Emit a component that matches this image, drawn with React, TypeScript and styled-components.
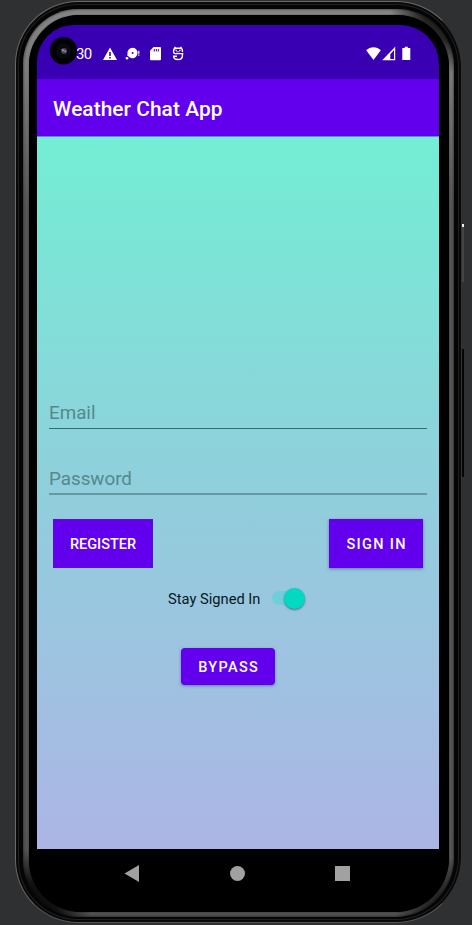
import React from "react";
import styled, { createGlobalStyle } from "styled-components";

const GlobalStyle = createGlobalStyle`
  *, *::before, *::after { box-sizing: border-box; }
  html, body { margin: 0; padding: 0; background: #2f3032; overflow: hidden; }
  body { font-family: Roboto, sans-serif; }
  button, input { font-family: inherit; margin: 0; }
`;

const Desk = styled.main`
  width: 472px;
  height: 925px;
  padding: 1px 10px 2px 15px;
  background: #2f3032;
`;

const Shell = styled.div`
  position: relative;
  width: 447px;
  height: 922px;
  padding: 7px 7px 5px;
  border: 1px solid #68696a;
  border-right-color: #343434;
  border-bottom-color: #555;
  border-radius: 63px 66px 66px 63px;
  background: #050505;
  box-shadow: inset 0 0 0 2px #090909, inset 0 0 0 3px #202020;
`;

const MetalRim = styled.div`
  height: 100%;
  padding: 6px 5px 5px 6px;
  border-radius: 55px 57px 59px 56px;
  background:
    radial-gradient(circle at 100% 0, #151515 0, #252525 32px, transparent 64px),
    radial-gradient(circle at 0 100%, #050505 0, #111 34px, transparent 68px),
    radial-gradient(circle at 100% 100%, #101010 0, #242424 25px, transparent 60px),
    linear-gradient(180deg, #858585 0, #7c7c7c 60px, #555 200px, #555 820px, #505050 100%);
  box-shadow: inset 0 0 2px 1px rgba(0, 0, 0, 0.35);
`;

const Bezel = styled.div`
  height: 100%;
  padding: 10px 10px 0 8px;
  border-radius: 50px 52px 54px 52px;
  background: #000;
  box-shadow: 0 0 1px #000;
`;

const Screen = styled.div`
  width: 402px;
  height: 824px;
  display: flex;
  flex-direction: column;
  overflow: hidden;
  border-radius: 37px 39px 0 0;
`;

const SideKey = styled.i<{ $top: number; $height: number; $color: string }>`
  position: absolute;
  right: -3px;
  top: ${(p) => p.$top}px;
  width: 2px;
  height: ${(p) => p.$height}px;
  background: ${(p) => p.$color};
`;

const StatusBar = styled.header`
  height: 54px;
  flex: none;
  display: flex;
  align-items: center;
  justify-content: space-between;
  padding: 3px 24px 0 39px;
  position: relative;
  background: #3900b3;
  color: #fff;
`;

const StatusGroup = styled.div`
  display: flex;
  align-items: center;
`;

const Clock = styled.span`
  width: 26px;
  font-size: 15px;
  line-height: 18px;
  letter-spacing: -0.7px;
`;

const StatusIcon = styled.svg<{ $gap?: number }>`
  display: block;
  width: 16px;
  height: 16px;
  margin-left: ${(p) => p.$gap ?? 0}px;
  fill: currentColor;
`;

const Camera = styled.svg`
  position: absolute;
  left: 12px;
  top: 11px;
  width: 29px;
  height: 29px;
`;

const AppBar = styled.div`
  height: 58px;
  flex: none;
  display: flex;
  align-items: center;
  padding: 2px 16px 0;
  background: #6200ee;
  border-bottom: 1px solid #6b83df;
  color: #fff;
`;

const Title = styled.h1`
  margin: 0;
  font-size: 20.9px;
  line-height: 26px;
  font-weight: 500;
  letter-spacing: 0.05px;
`;

const Form = styled.form`
  flex: 1;
  display: flex;
  flex-direction: column;
  padding: 258px 12px 0;
  background: linear-gradient(180deg, #73eed4 0%, #91cedc 51%, #acb5e5 100%);
`;

const Field = styled.input<{ $line: string }>`
  width: 378px;
  height: 34px;
  flex: none;
  padding: 2px 0 0;
  border: 0;
  border-bottom: 1px solid ${(p) => p.$line};
  border-radius: 0;
  outline: 0;
  background: transparent;
  font-size: 18.8px;
  line-height: 24px;
  color: #111;
  &::placeholder { color: #55888d; opacity: 1; }
  & + & { margin-top: 31px; height: 35px; padding-top: 4px; border-bottom-width: 2px; }
`;

const Actions = styled.div`
  display: flex;
  justify-content: space-between;
  margin-top: 24px;
  padding: 0 4px;
`;

const Button = styled.button<{ $width: number; $height?: number; $spacing?: number; $round?: boolean; $flat?: boolean }>`
  width: ${(p) => p.$width}px;
  height: ${(p) => p.$height ?? 49}px;
  padding: 2px 0 0 ${(p) => p.$spacing ?? 0}px;
  border: 0;
  border-radius: ${(p) => (p.$round ? 4 : 0)}px;
  background: #6200ee;
  box-shadow: ${(p) => (p.$flat ? "inset 0 0 0 1px #560fdb" : "0 1px 3px rgba(40, 60, 100, .5)")};
  color: #fff;
  font-size: 14.5px;
  font-weight: 500;
  letter-spacing: ${(p) => p.$spacing ?? 0}px;
  white-space: nowrap;
`;

const StayRow = styled.label`
  display: flex;
  align-items: center;
  height: 24px;
  margin: 19px 0 0 119px;
  color: #07191f;
  font-size: 14.7px;
  white-space: nowrap;
`;

const StayText = styled.span`
  width: 104px;
`;

const SwitchTrack = styled.span`
  display: flex;
  align-items: center;
  justify-content: flex-end;
  width: 32.5px;
  height: 14px;
  margin-top: -2px;
  border-radius: 7px;
  background: linear-gradient(90deg, #72cddb 75%, transparent 75%);
`;

const SwitchThumb = styled.span`
  width: 21px;
  height: 21px;
  flex: none;
  border-radius: 50%;
  background: #03d8c0;
  box-shadow: 0 1px 2px rgba(20, 60, 80, .6);
`;

const BypassRow = styled.div`
  margin: 37px 0 0 132px;
`;

const NavBar = styled.nav`
  display: flex;
  align-items: center;
  height: 49px;
  padding-left: 87px;
  gap: 90.5px;
`;

const NavIcon = styled.svg`
  width: 15px;
  height: 17px;
  fill: #a1a1a1;
`;

export default function App() {
  return (
    <>
      <GlobalStyle />
      <Desk>
        <Shell>
          <SideKey $top={222} $height={3} $color="#eee" />
          <SideKey $top={225} $height={55} $color="#454545" />
          <SideKey $top={347} $height={128} $color="#060606" />
          <MetalRim>
            <Bezel>
              <Screen>
                <StatusBar>
                  <StatusGroup>
                    <Clock>30</Clock>
                    <StatusIcon viewBox="0 0 16 16" aria-label="Warning">
                      <path fillRule="evenodd" d="M8 1.5 15 14H1ZM7.2 6v4h1.6V6ZM7.2 11v1.6h1.6V11Z" />
                    </StatusIcon>
                    <StatusIcon $gap={7} viewBox="0 0 16 16">
                      <path fillRule="evenodd" d="M7.6 1.8a5.2 5.2 0 1 1-3.1 9.5L2.3 9.6V8.3h.3A5.2 5.2 0 0 1 7.6 1.8Zm0 4.2a1 1 0 1 0 0 2 1 1 0 0 0 0-2Z" />
                      <circle cx="2" cy="12.3" r="1.3" />
                      <path d="M13.2 4.8h1.2v3h-1.2Zm0 3.8h1.2v1.2h-1.2Z" />
                    </StatusIcon>
                    <StatusIcon $gap={7} viewBox="0 0 16 16">
                      <path fillRule="evenodd" d="M5.5 1H12q1 0 1 1v11.2q0 1-1 1H3q-1 0-1-1V4.8Zm.3 2v2.5h1V3Zm2 0v2.5h1V3Zm2 0v2.5h1V3Z" />
                    </StatusIcon>
                    <StatusIcon $gap={6} viewBox="0 0 16 16">
                      <path fill="none" stroke="currentColor" strokeWidth="1.4" d="m4.5.8 1 1.4M11.5.8l-1 1.4M12.4 6V4.7q0-2.5-2.5-2.5H6.1q-2.5 0-2.5 2.5V6q0 1.6 1.6 1.6h8.1M12.4 7.6v2.1q0 3.8-4.4 3.8t-4.4-3.2H7" />
                      <path d="M5.5 3.7h1.3V5H5.5Zm3.7 0h1.3V5H9.2ZM6.3 5.5h3.4v.7H6.3Z" />
                    </StatusIcon>
                  </StatusGroup>
                  <StatusGroup>
                    <StatusIcon viewBox="0 0 16 16" aria-label="Wi-Fi">
                      <path d="M.2 4.3C4.2.2 10.8.2 14.8 4.3L7.5 14Z" />
                    </StatusIcon>
                    <StatusIcon viewBox="0 0 16 16" aria-label="Signal">
                      <path fillRule="evenodd" d="M13.2.8v13.4H.2Zm-1.2 3.3L8.3 8.2v4.8H12Z" />
                    </StatusIcon>
                    <StatusIcon $gap={1} viewBox="0 0 16 16" aria-label="Battery">
                      <path d="M5.8.7h3v1.4h2.5v12H3.3v-12h2.5Z" />
                    </StatusIcon>
                  </StatusGroup>
                  <Camera viewBox="0 0 29 29">
                    <circle cx="14.5" cy="14.8" r="13.7" fill="#020204" />
                    <circle cx="14.5" cy="14.8" r="7.5" fill="#09080d" />
                    <circle cx="15" cy="15" r="3" fill="#454459" />
                    <path d="m13.2 13.4 1.4 1.6" stroke="#aaaabf" strokeWidth="1.4" />
                    <circle cx="16.2" cy="15.3" r="1" fill="#8f8da2" />
                  </Camera>
                </StatusBar>
                <AppBar>
                  <Title>Weather Chat App</Title>
                </AppBar>
                <Form onSubmit={(e) => e.preventDefault()}>
                  <Field $line="#316d77" placeholder="Email" type="email" />
                  <Field $line="#6799a4" placeholder="Password" type="password" />
                  <Actions>
                    <Button type="button" $width={100} $flat>REGISTER</Button>
                    <Button type="submit" $width={94} $spacing={1.35}>SIGN IN</Button>
                  </Actions>
                  <StayRow>
                    <StayText>Stay Signed In</StayText>
                    <SwitchTrack role="switch" aria-checked="true">
                      <SwitchThumb />
                    </SwitchTrack>
                  </StayRow>
                  <BypassRow>
                    <Button type="button" $width={94} $height={37} $spacing={1.35} $round>BYPASS</Button>
                  </BypassRow>
                </Form>
              </Screen>
              <NavBar>
                <NavIcon viewBox="0 0 15 17"><path d="M.5 8.5 15 0v17Z" /></NavIcon>
                <NavIcon viewBox="0 0 15 17"><circle cx="7.5" cy="8.5" r="7.5" /></NavIcon>
                <NavIcon viewBox="0 0 15 17"><path d="M0 1h15v15H0Z" /></NavIcon>
              </NavBar>
            </Bezel>
          </MetalRim>
        </Shell>
      </Desk>
    </>
  );
}
